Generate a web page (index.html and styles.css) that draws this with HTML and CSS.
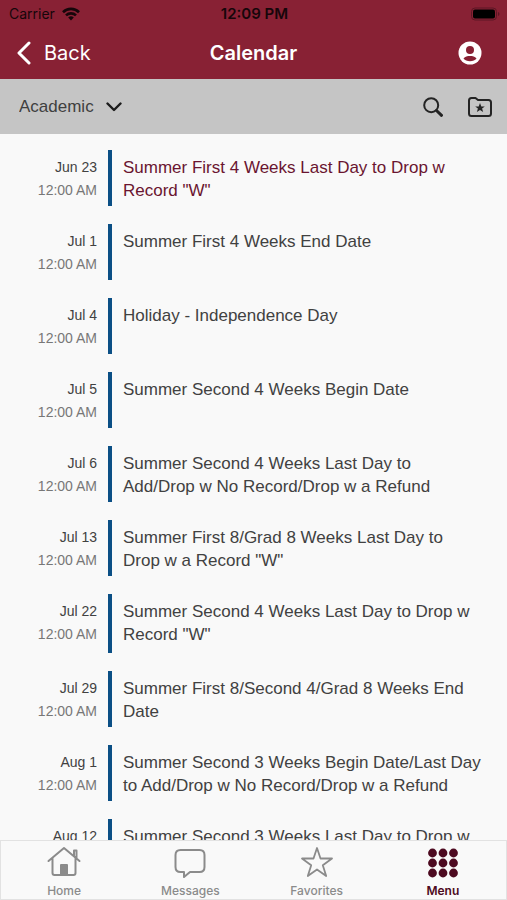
FILE: index.html
```html
<!DOCTYPE html>
<html lang="en">
<head>
  <meta charset="UTF-8" />
  <meta name="viewport" content="width=device-width, initial-scale=1.0"/>
  <title>Calendar</title>
  <link rel="stylesheet" href="styles.css">
</head>
<body>

  <!-- Top bar -->
  <header class="top">
    <div class="status">
      <span class="carrier">
        Carrier
        <svg width="18" height="14" viewBox="0 0 18 14" fill="none" stroke="currentColor" stroke-width="2.6" aria-hidden="true">
          <path d="M1 5.2a11.4 11.4 0 0 1 16 0M4 8.4a7.2 7.2 0 0 1 10 0"/>
          <path d="M9 13.4L6.2 10.6a4 4 0 0 1 5.600 0z" fill="currentColor" stroke="none"/>
        </svg>
      </span>
      <span class="time">12:09 PM</span>
      <svg class="battery" width="30" height="14" viewBox="0 0 30 14" aria-hidden="true">
        <rect x="1.5" y="1" width="25" height="12" rx="3.5" fill="none" stroke="#5c1624"/>
        <rect x="3" y="2.5" width="22" height="9" rx="2" fill="#000"/>
        <path d="M28 5v4q1.5-.5 1.5-2t-1.5-2z" fill="#5c1624"/>
      </svg>
    </div>
    <div class="nav">
      <button class="back" type="button">
        <svg width="16" height="24" viewBox="0 0 16 24" fill="none" stroke="currentColor" stroke-width="3" stroke-linecap="round" stroke-linejoin="round" aria-hidden="true">
          <path d="M13 2L3 12l10 10"/>
        </svg>
        Back
      </button>
      <h1>Calendar</h1>
      <button class="profile" type="button" aria-label="Profile">
        <svg width="24" height="24" viewBox="0 0 24 24" aria-hidden="true">
          <circle cx="12" cy="12" r="11.5" fill="#fff"/>
          <circle cx="12" cy="9" r="4" fill="#882134"/>
          <path d="M5.5 17.5C7 15.2 9.5 15 12 15s5 .2 6.5 2.5C17 19.3 14.8 20.2 12 20.2s-5-.9-6.500-2.7z" fill="#882134"/>
        </svg>
      </button>
    </div>
  </header>

  <!-- Filter bar -->
  <div class="filter">
    <div class="picker">
      <select aria-label="Calendar type">
        <option>Academic</option>
      </select>
      <svg width="16" height="10" viewBox="0 0 16 10" fill="none" stroke="#1c1c1c" stroke-width="2.4" stroke-linecap="round" stroke-linejoin="round" aria-hidden="true">
        <path d="M1.5 1.5L8 8l6.500-6.500"/>
      </svg>
    </div>
    <div class="tools">
      <button type="button" aria-label="Search">
        <svg width="20" height="20" viewBox="0 0 20 20" fill="none" stroke="currentColor" stroke-linecap="round" aria-hidden="true">
          <circle cx="8.2" cy="8.2" r="7" stroke-width="2"/>
          <path d="M13.5 13.5l5 4.800" stroke-width="3"/>
        </svg>
      </button>
      <button type="button" aria-label="Saved calendars">
        <svg width="24" height="20" viewBox="0 0 24 20" aria-hidden="true">
          <path d="M1 3.5Q1 1 3.5 1h4L10 3h10.5Q23 3 23 5.5v11q0 2.500-2.500 2.500h-17Q1 19 1 16.5z" fill="none" stroke="currentColor" stroke-width="2" stroke-linejoin="round"/>
          <path d="M12 6l1.300 3.400h3.500l-2.700 2.200 1 3.500-3.100-2-3.100 2 1-3.500-2.700-2.200h3.500z" fill="currentColor"/>
        </svg>
      </button>
    </div>
  </div>

  <!-- Events -->
  <main class="events">
    <article class="event active">
      <time>Jun 23<span>12:00 AM</span></time>
      <h2>Summer First 4 Weeks Last Day to Drop w Record "W"</h2>
    </article>
    <article class="event">
      <time>Jul 1<span>12:00 AM</span></time>
      <h2>Summer First 4 Weeks End Date</h2>
    </article>
    <article class="event">
      <time>Jul 4<span>12:00 AM</span></time>
      <h2>Holiday - Independence Day</h2>
    </article>
    <article class="event">
      <time>Jul 5<span>12:00 AM</span></time>
      <h2>Summer Second 4 Weeks Begin Date</h2>
    </article>
    <article class="event">
      <time>Jul 6<span>12:00 AM</span></time>
      <h2>Summer Second 4 Weeks Last Day to <br>Add/Drop w No Record/Drop w a Refund</h2>
    </article>
    <article class="event">
      <time>Jul 13<span>12:00 AM</span></time>
      <h2>Summer First 8/Grad 8 Weeks Last Day to <br>Drop w a Record "W"</h2>
    </article>
    <article class="event tall">
      <time>Jul 22<span>12:00 AM</span></time>
      <h2>Summer Second 4 Weeks Last Day to Drop w Record "W"</h2>
    </article>
    <article class="event">
      <time>Jul 29<span>12:00 AM</span></time>
      <h2>Summer First 8/Second 4/Grad 8 Weeks End Date</h2>
    </article>
    <article class="event">
      <time>Aug 1<span>12:00 AM</span></time>
      <h2>Summer Second 3 Weeks Begin Date/Last Day to Add/Drop w No Record/Drop w a Refund</h2>
    </article>
    <article class="event">
      <time>Aug 12<span>12:00 AM</span></time>
      <h2>Summer Second 3 Weeks Last Day to Drop w</h2>
    </article>
  </main>

  <!-- Tab bar -->
  <nav class="tabs">
    <a href="#home">
      <svg width="34" height="32" viewBox="0 0 34 32" fill="none" stroke="currentColor" stroke-width="2" stroke-linecap="round" stroke-linejoin="round" aria-hidden="true">
        <path d="M1.5 15L17 2l15.5 13M5.5 12v15q0 2 2 2h19q2 0 2-2V12M27 10V4.5h2.500V12"/>
        <path d="M14 19h6v9h-6z" fill="currentColor"/>
      </svg>
      Home
    </a>
    <a href="#messages">
      <svg width="34" height="32" viewBox="0 0 34 32" fill="none" stroke="currentColor" stroke-width="2" stroke-linejoin="round" aria-hidden="true">
        <path d="M7.500 4h19q5 0 5 5v12q0 5-5 5H17l-6 5v-5H7.500q-5 0-5-5V9q0-5 5-5z"/>
      </svg>
      Messages
    </a>
    <a href="#favorites">
      <svg width="34" height="32" viewBox="0 0 34 32" fill="none" stroke="currentColor" stroke-width="1.8" stroke-linejoin="round" aria-hidden="true">
        <path d="M17 2l3.500 10.500H32l-9.200 6.700L26.200 30 17 23.400 7.800 30l3.400-10.800L2 12.500h11.500z"/>
      </svg>
      Favorites
    </a>
    <a class="current" href="#menu">
      <svg width="34" height="32" viewBox="0 0 34 32" fill="currentColor" aria-hidden="true">
        <circle cx="6.500" cy="7" r="4.400"/><circle cx="17" cy="7" r="4.400"/><circle cx="27.500" cy="7" r="4.400"/>
        <circle cx="6.500" cy="17" r="4.400"/><circle cx="17" cy="17" r="4.400"/><circle cx="27.500" cy="17" r="4.400"/>
        <circle cx="6.500" cy="27" r="4.400"/><circle cx="17" cy="27" r="4.400"/><circle cx="27.500" cy="27" r="4.400"/>
      </svg>
      Menu
    </a>
  </nav>

</body>
</html>
```

FILE: styles.css
```css
* {
  box-sizing: border-box;
}
body {
  margin: 0;
  height: 100vh;
  display: flex;
  flex-direction: column;
  font-family: "Liberation Sans", Arial, sans-serif;
  background: #f9f9f9;
  color: #414141;
}
svg {
  display: block;
  flex: none;
}
button {
  padding: 0;
  border: none;
  background: none;
  color: inherit;
  font: inherit;
  cursor: pointer;
}
.top {
  background: #882134;
  font-family: Inter, sans-serif;
}
.status,
.nav {
  display: grid;
  grid-template-columns: 1fr auto 1fr;
  align-items: center;
}
.status {
  height: 27px;
  padding: 0 7px 0 9px;
  color: #16060a;
  font-size: 14px;
}
.carrier {
  display: flex;
  align-items: center;
  gap: 7px;
}
.time {
  font-size: 15px;
  font-weight: 600;
}
.battery,
.profile {
  justify-self: end;
}
.nav {
  height: 52px;
  padding: 0 16px;
  color: #fff;
}
.profile {
  margin-right: 9px;
}
.back {
  display: flex;
  align-items: center;
  gap: 12px;
  font-size: 20px;
}
.nav h1 {
  margin: 0;
  font-size: 20px;
  font-weight: 600;
}
.filter {
  display: flex;
  align-items: center;
  justify-content: space-between;
  height: 55px;
  padding: 0 15px 0 19px;
  background: #c5c5c5;
}
.picker {
  display: grid;
  align-items: center;
}
.picker select,
.picker svg {
  grid-area: 1 / 1;
}
.picker select {
  appearance: none;
  margin: 0;
  padding: 4px 28px 4px 0;
  border: none;
  background: none;
  color: #3f3f3f;
  font-family: inherit;
  font-size: 17px;
}
.picker svg {
  justify-self: end;
  pointer-events: none;
}
.tools {
  display: flex;
  align-items: center;
  gap: 25px;
  color: #242424;
}
.events {
  flex: 1;
  min-height: 0;
  overflow-y: auto;
  scrollbar-width: none;
  display: flex;
  flex-direction: column;
  gap: 18px;
  padding: 16px 16px 18px 0;
}
.event {
  flex: none;
  display: grid;
  grid-template-columns: 97px 1fr;
  gap: 11px;
  min-height: 56px;
  line-height: 23px;
}
.event.tall {
  min-height: 59px;
}
.event time {
  padding-top: 6px;
  text-align: right;
  font-size: 14px;
}
.event time span {
  display: block;
  color: #777;
}
.event h2 {
  margin: 0;
  padding: 6px 0 4px 11px;
  border-left: 4px solid #0b4f85;
  font-size: 17px;
  font-weight: normal;
}
.event.active h2 {
  color: #6a1530;
}
.tabs {
  display: grid;
  grid-template-columns: repeat(4, 1fr);
  height: 60px;
  border: 1px solid #e2e2e2;
  background: #f9f9f9;
}
.tabs a {
  display: flex;
  flex-direction: column;
  align-items: center;
  gap: 5px;
  padding-top: 5px;
  color: #8b8b8b;
  font-family: Inter, sans-serif;
  font-size: 12px;
  font-weight: 500;
  text-decoration: none;
}
.tabs .current {
  color: #4d0a20;
  font-weight: 600;
}
```
